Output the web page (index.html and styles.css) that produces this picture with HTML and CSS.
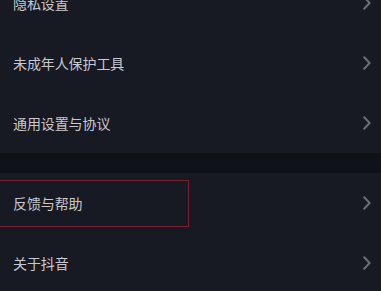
FILE: index.html
```html
<!DOCTYPE html>
<html lang="zh">
<head>
<meta charset="utf-8">
<link rel="stylesheet" href="styles.css">
</head>
<body>
<div class="page">
  <div class="group">
    <div class="row"><span class="label">隐私设置</span><svg class="chev" viewBox="0 0 8 14"><path d="M1.2 1.2 L6.6 7 L1.2 12.8"/></svg></div>
    <div class="row"><span class="label">未成年人保护工具</span><svg class="chev" viewBox="0 0 8 14"><path d="M1.2 1.2 L6.6 7 L1.2 12.8"/></svg></div>
    <div class="row"><span class="label">通用设置与协议</span><svg class="chev" viewBox="0 0 8 14"><path d="M1.2 1.2 L6.6 7 L1.2 12.8"/></svg></div>
  </div>
  <div class="gap"></div>
  <div class="group">
    <div class="row highlighted"><span class="label">反馈与帮助</span><svg class="chev" viewBox="0 0 8 14"><path d="M1.2 1.2 L6.6 7 L1.2 12.8"/></svg><div class="mark"></div></div>
    <div class="row"><span class="label">关于抖音</span><svg class="chev" viewBox="0 0 8 14"><path d="M1.2 1.2 L6.6 7 L1.2 12.8"/></svg></div>
  </div>
</div>
</body>
</html>
```
FILE: styles.css
```css
html, body {
  margin: 0;
  padding: 0;
  background: #171923;
  overflow: hidden;
}
body {
  height: 291px;
}
.page {
  width: 381px;
  margin-top: -27px;
  font-family: "Noto Sans CJK SC", "Noto Sans", sans-serif;
}
.group {
  display: flex;
  flex-direction: column;
}
.row {
  position: relative;
  height: 60px;
  display: flex;
  align-items: center;
  justify-content: space-between;
  padding: 0 10px 0 13px;
}
.label {
  color: #c8c9ce;
  font-size: 14px;
  font-weight: 400;
  letter-spacing: -0.1px;
}
.chev {
  width: 8px;
  height: 14px;
  fill: none;
  stroke: #6c6e75;
  stroke-width: 2;
  stroke-linecap: round;
  stroke-linejoin: round;
}
.gap {
  height: 20px;
  background: #10121a;
}
.mark {
  position: absolute;
  left: -1px;
  top: 7px;
  width: 188px;
  height: 45px;
  border: 1px solid #7e1f31;
}
```
